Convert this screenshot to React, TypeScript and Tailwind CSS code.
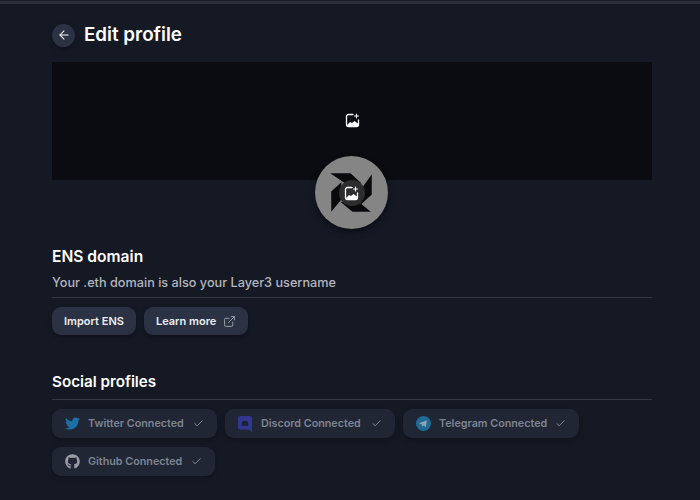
// Edit profile page: banner, avatar, ENS domain and social profile sections
import { FaTwitter, FaGithub } from 'react-icons/fa'
import { ArrowLeft, Check, ExternalLink } from 'lucide-react'

function ImagePlus() {
  return (
    <svg width="15" height="15" viewBox="0 0 15 15" fill="none">
      <path d="M8 1.5H3.5a2 2 0 0 0-2 2v8a2 2 0 0 0 2 2h8a2 2 0 0 0 2-2V7" stroke="white" strokeWidth="1.3" strokeLinecap="round" />
      <path d="M2 12l3-3 2 1L9.5 8 13.5 11v1.5a1 1 0 0 1-1 1h-9A1.5 1.5 0 0 1 2 12z" fill="white" />
      <path d="M11.5 1v4M9.5 3h4" stroke="white" strokeWidth="1.1" strokeLinecap="round" />
    </svg>
  )
}

function Logo() {
  return (
    <svg className="absolute inset-0" width="73" height="73" viewBox="0 0 72 72">
      <g fill="#0a0a0c">
        <path d="M15 17L35 17L46 27L30 27z" />
        <path d="M56 18L56 38L45 48L46 32z" />
        <path d="M55 55L37 55L25 45L43 45z" />
        <path d="M16 55L16 35L26 26L26 43z" />
      </g>
    </svg>
  )
}

// old-style Discord bubble with the tail at the bottom right
function DiscordIcon() {
  return (
    <svg width="14" height="16" viewBox="0 0 14 16">
      <path d="M2 0h10a2 2 0 0 1 2 2v14l-3.2-2.6H2a2 2 0 0 1-2-2V2a2 2 0 0 1 2-2z" fill="#31378f" />
      <path d="M3.6 9.6c.8.5 1.2.6 1.6.6l.4-.6c1 .3 1.8.3 2.8 0l.4.6c.4 0 .8-.1 1.6-.6 0-2-.5-3.6-1.2-4.4-.6-.3-1.1-.4-1.4-.4l-.2.3a5 5 0 0 0-1.2 0l-.2-.3c-.3 0-.8.1-1.4.4C4.100 6 3.600 7.600 3.600 9.600z" fill="#1c2130" />
    </svg>
  )
}

function TelegramIcon() {
  return (
    <svg width="15" height="15" viewBox="0 0 15 15">
      <circle cx="7.500" cy="7.500" r="7.500" fill="#1f6c97" />
      <path d="M3 7.300l8-3.100-1.300 6.800-2.300-1.600-1.200 1.200-.3-2.200z" fill="#8fa3b3" />
    </svg>
  )
}

function ActionButton({ children }: { children: React.ReactNode }) {
  return (
    <button className="h-7 px-3 flex items-center gap-[7px] rounded-[9px] bg-[#2b3243] text-[11px] font-semibold text-[#eceef2] shadow-[0_2px_4px_rgba(0,0,0,0.3)]">
      {children}
    </button>
  )
}

function SocialChip({ icon, label, width }: { icon: React.ReactNode; label: string; width: string }) {
  return (
    <div className={`${width} h-[29px] pl-3 pr-[13px] flex items-center rounded-[9px] bg-[#212635] shadow-[0_2px_4px_rgba(0,0,0,0.25)]`}>
      <span className="w-4 flex justify-center">{icon}</span>
      <span className="ml-2 pt-[2px] text-[10.75px] font-semibold text-[#7e8390]">{label} Connected</span>
      <Check size={11} className="ml-auto text-[#b0b3bb]" strokeWidth={1.5} />
    </div>
  )
}

export default function App() {
  return (
    <div className="w-[700px] h-[500px] overflow-hidden bg-[#151924] font-['Inter',sans-serif]">
      <div className="h-[4px] bg-[#2a2e3a] border-t border-[#1a1d27]" />

      <main className="pl-[52px] pr-[48px] pt-[19px]">
        <div className="flex items-center gap-[9px] h-6">
          <button className="w-[23px] h-[23px] rounded-full bg-[#2b3243] flex items-center justify-center shadow-[0_2px_4px_rgba(0,0,0,0.3)]">
            <ArrowLeft size={14} className="text-white" strokeWidth={1.75} />
          </button>
          <h1 className="text-[18.8px] font-semibold text-white">Edit profile</h1>
        </div>

        <div className="relative mt-[15px] h-[118px] bg-[#0b0c11] flex items-center justify-center">
          <span className="-mt-[1px]"><ImagePlus /></span>
          {/* avatar sits over the banner's bottom edge */}
          <div className="absolute left-[263px] top-[94px] w-[73px] h-[73px] rounded-full bg-[#858585] shadow-[0_3px_6px_rgba(0,0,0,0.5)] flex items-center justify-center">
            <Logo />
            <div className="relative mt-[1px] w-[26px] h-[26px] rounded-full bg-[#2d2d2f] flex items-center justify-center">
              <ImagePlus />
            </div>
          </div>
        </div>

        <h2 className="mt-[67px] text-[15.6px] leading-[20px] font-semibold text-white">ENS domain</h2>
        <p className="mt-[7px] text-[12.7px] leading-[18px] font-medium text-[#b3b6bf]">Your .eth domain is also your Layer3 username</p>
        <div className="mt-[5px] border-t border-[#343845]" />
        <div className="mt-[9px] flex gap-2">
          <ActionButton>Import ENS</ActionButton>
          <ActionButton>
            Learn more
            <ExternalLink size={13} className="text-[#b3b6bf]" strokeWidth={1.5} />
          </ActionButton>
        </div>

        <h2 className="mt-[37px] text-[15.2px] leading-[20px] font-semibold text-white">Social profiles</h2>
        <div className="mt-[7px] border-t border-[#343845]" />
        <div className="mt-[9px] flex flex-wrap gap-x-2 gap-y-[9px]">
          <SocialChip width="w-[165px]" icon={<FaTwitter size={15} className="text-[#1b6fa6]" />} label="Twitter" />
          <SocialChip width="w-[170px]" icon={<DiscordIcon />} label="Discord" />
          <SocialChip width="w-[176px]" icon={<TelegramIcon />} label="Telegram" />
          <SocialChip width="w-[163px]" icon={<FaGithub size={15} className="text-[#9a9da5]" />} label="Github" />
        </div>
      </main>
    </div>
  )
}
